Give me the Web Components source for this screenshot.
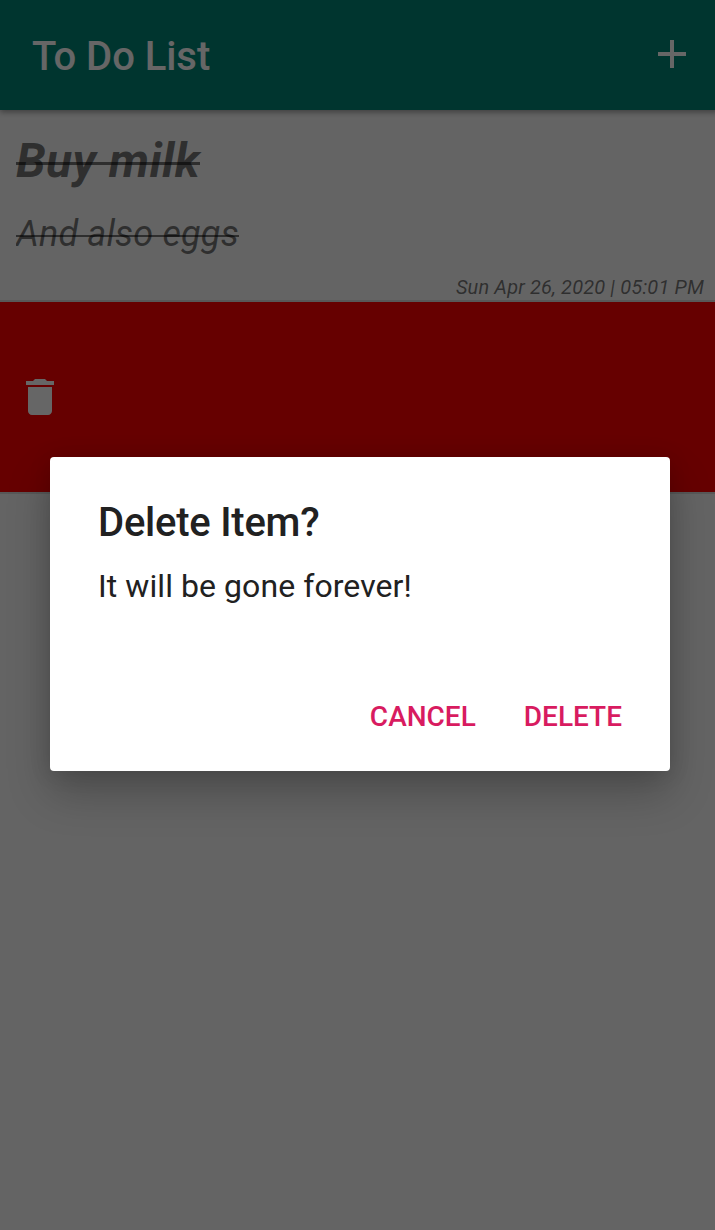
<!DOCTYPE html>
<html lang="en">
<head>
<meta charset="utf-8">
<title>To Do List</title>
<style>
html,body{margin:0;height:100%;overflow:hidden;background:#646464}
body{font-family:Roboto,sans-serif}
</style>
</head>
<body>
<todo-screen>
  <app-bar>To Do List</app-bar>
  <todo-item>
    <span slot="title">Buy milk</span>
    <span slot="note">And also eggs</span>
    <span slot="date">Sun Apr 26, 2020 | 05:01 PM</span>
  </todo-item>
  <swipe-row></swipe-row>
  <confirm-dialog slot="overlay">
    <span slot="title">Delete Item?</span>
    <span slot="message">It will be gone forever!</span>
    <dialog-button slot="actions">CANCEL</dialog-button>
    <dialog-button slot="actions">DELETE</dialog-button>
  </confirm-dialog>
</todo-screen>
<script>
function define(name, html) {
  customElements.define(name, class extends HTMLElement {
    constructor() {
      super();
      this.attachShadow({ mode: 'open' }).innerHTML = html;
    }
  });
}

define('todo-screen', `
<style>
:host{display:block;position:relative;width:720px;height:1230px;overflow:hidden;background:#fafafa}
.page{display:flex;flex-direction:column}
.scrim{position:absolute;z-index:2;inset:0;background:rgba(0,0,0,.6);display:flex;justify-content:center;align-items:flex-start;padding-top:457px;box-sizing:border-box}
</style>
<div class="page"><slot></slot></div>
<div class="scrim"><slot name="overlay"></slot></div>`);

define('app-bar', `
<style>
:host{display:flex;align-items:center;justify-content:space-between;height:110px;box-sizing:border-box;padding:4px 24px 0 32px;background:#008577;color:#fff;font-size:40px;line-height:48px;font-weight:500;letter-spacing:-.06px;position:relative;z-index:1;box-shadow:0 2px 6px rgba(0,0,0,.4)}
svg{display:block;width:48px;height:48px;margin-top:-6px}
</style>
<span><slot></slot></span>
<svg viewBox="0 0 24 24" fill="#fff"><path d="M19 13h-6v6h-2v-6H5v-2h6V5h2v6h6v2z"/></svg>`);

define('todo-item', `
<style>
:host{display:flex;flex-direction:column;align-items:flex-start;height:192px;box-sizing:border-box;padding:22px 16px 0;border-bottom:2px solid rgba(0,0,0,.12);color:rgba(0,0,0,.54);font-style:italic}
.strike{position:relative;clip-path:inset(0 -6px 0 0)}
.strike::after{content:"";position:absolute;left:0;right:0;background:currentColor}
.title{font-size:48px;line-height:58px;font-weight:700;letter-spacing:.4px}
.title::after{top:30px;height:3px}
.note{margin-top:23px;font-size:36px;line-height:42px;letter-spacing:.17px}
.note::after{top:22px;height:2px}
.date{align-self:flex-end;margin-top:20px;font-size:20px;line-height:24px;letter-spacing:.15px}
</style>
<div class="strike title"><slot name="title"></slot></div>
<div class="strike note"><slot name="note"></slot></div>
<div class="date"><slot name="date"></slot></div>`);

define('swipe-row', `
<style>
:host{display:flex;align-items:center;height:192px;box-sizing:border-box;padding:0 16px;background:#f00;background-clip:padding-box;border-bottom:2px solid rgba(0,0,0,.12)}
svg{display:block;width:48px;height:48px}
</style>
<svg viewBox="0 0 24 24" fill="#fff"><path d="M6 19c0 1.1.9 2 2 2h8c1.1 0 2-.9 2-2V7H6v12zM19 4h-3.5l-1-1h-5l-1 1H5v2h14V4z"/></svg>`);

define('confirm-dialog', `
<style>
:host{display:flex;flex-direction:column;width:620px;height:314px;box-sizing:border-box;padding:42px 48px 0;background:#fff;border-radius:4px;color:#212121;box-shadow:0 22px 44px rgba(0,0,0,.24),0 2px 22px rgba(0,0,0,.12)}
.title{font-size:40px;line-height:48px;font-weight:500;letter-spacing:-.23px}
.message{margin-top:20px;font-size:32px;line-height:38px;letter-spacing:.07px}
.actions{display:flex;justify-content:flex-end;gap:48px;margin-top:95px}
</style>
<div class="title"><slot name="title"></slot></div>
<div class="message"><slot name="message"></slot></div>
<div class="actions"><slot name="actions"></slot></div>`);

define('dialog-button', `
<style>:host{display:block;color:#d81b60;font-size:28px;line-height:34px;font-weight:500}</style>
<slot></slot>`);
</script>
</body>
</html>
